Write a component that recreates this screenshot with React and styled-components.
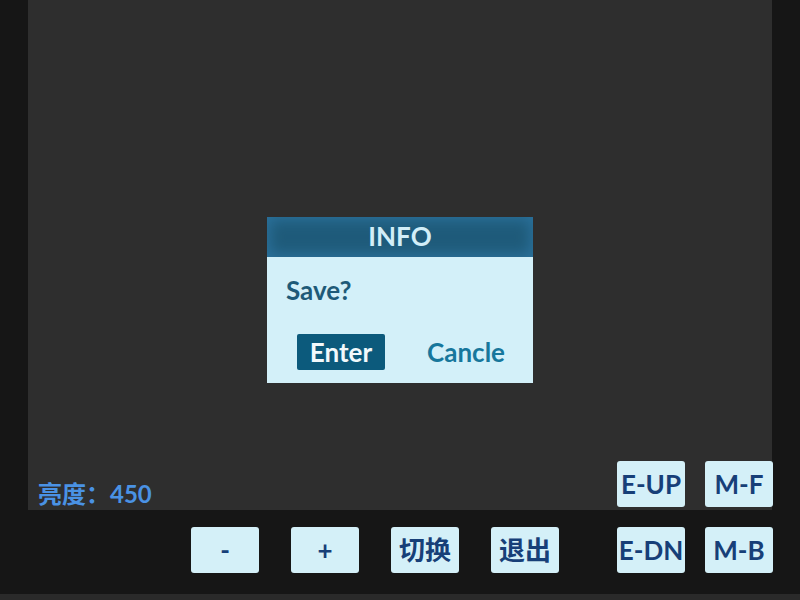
import React from "react";
import styled, { createGlobalStyle } from "styled-components";

const FONT = `"Lato", "Noto Sans CJK SC", "Noto Sans", sans-serif`;

const Global = createGlobalStyle`
  html, body { margin: 0; padding: 0; }
  body {
    width: 800px;
    height: 600px;
    overflow: hidden;
    background: #161616;
    font-family: ${FONT};
  }
`;

const Page = styled.div`
  width: 800px;
  height: 600px;
  display: flex;
  flex-direction: column;
  background: #161616;
`;

const Screen = styled.div`
  margin: 0 28px;
  height: 510px;
  background: #2e2e2e;
  display: flex;
  flex-direction: column;
  justify-content: flex-end;
`;

const ScreenFooter = styled.div`
  display: flex;
  align-items: flex-end;
  justify-content: space-between;
  padding: 0 0 3px 10px;
  margin-right: -1px;
`;

const Brightness = styled.div`
  color: #4a92e4;
  font-size: 24px;
  font-weight: 700;
  line-height: 28px;
  margin-bottom: -1px;
  word-spacing: 2px;
`;

const KeyGroup = styled.div`
  display: flex;
  gap: ${(p) => p.$gap}px;
`;

const Key = styled.button`
  width: 68px;
  height: 46px;
  padding: 0;
  border: none;
  border-radius: 3px;
  background: #d4f0f8;
  color: #173f78;
  font-family: ${FONT};
  font-size: 26px;
  font-weight: 700;
  line-height: 46px;
  text-align: center;
`;

const BottomBar = styled.div`
  height: 84px;
  display: flex;
  justify-content: flex-end;
  align-items: flex-start;
  padding: 17px 27px 0 0;
  box-sizing: border-box;
  gap: 58px;
`;

const Strip = styled.div`
  height: 6px;
  background: #2a2a2a;
`;

const Overlay = styled.div`
  position: fixed;
  inset: 0;
  display: flex;
  align-items: center;
  justify-content: center;
  pointer-events: none;
`;

const Dialog = styled.div`
  width: 266px;
  height: 166px;
  background: #d3f0f9;
  display: flex;
  flex-direction: column;
`;

const DialogHeader = styled.div`
  height: 40px;
  box-sizing: border-box;
  padding: 1px 0 3px;
  background: #1f5b7a;
  box-shadow: inset 0 0 14px 3px #2b719b;
  color: #d2eef8;
  font-size: 26px;
  font-weight: 700;
  line-height: 36px;
  text-align: center;
`;

const Message = styled.div`
  padding: 15px 0 0 19px;
  height: 46px;
  color: #1e5a78;
  font-size: 26px;
  font-weight: 700;
  line-height: 36px;
`;

const Actions = styled.div`
  display: flex;
  align-items: center;
  justify-content: space-between;
  padding: 16px 28px 0 30px;
`;

const PrimaryAction = styled.div`
  width: 88px;
  height: 36px;
  border-radius: 2px;
  background: #0c5a7c;
  color: #f2f9fc;
  font-size: 26px;
  font-weight: 700;
  line-height: 36px;
  text-align: center;
`;

const TextAction = styled.div`
  color: #17779c;
  font-size: 26px;
  font-weight: 700;
  line-height: 36px;
`;

export default function App() {
  return (
    <>
      <Global />
      <Page>
        <Screen>
          <ScreenFooter>
            <Brightness>亮度：450</Brightness>
            <KeyGroup $gap={20}>
              <Key>E-UP</Key>
              <Key>M-F</Key>
            </KeyGroup>
          </ScreenFooter>
        </Screen>
        <BottomBar>
          <KeyGroup $gap={32}>
            <Key>-</Key>
            <Key>+</Key>
            <Key>切换</Key>
            <Key>退出</Key>
          </KeyGroup>
          <KeyGroup $gap={20}>
            <Key>E-DN</Key>
            <Key>M-B</Key>
          </KeyGroup>
        </BottomBar>
        <Strip />
      </Page>
      <Overlay>
        <Dialog>
          <DialogHeader>INFO</DialogHeader>
          <Message>Save?</Message>
          <Actions>
            <PrimaryAction>Enter</PrimaryAction>
            <TextAction>Cancle</TextAction>
          </Actions>
        </Dialog>
      </Overlay>
    </>
  );
}
